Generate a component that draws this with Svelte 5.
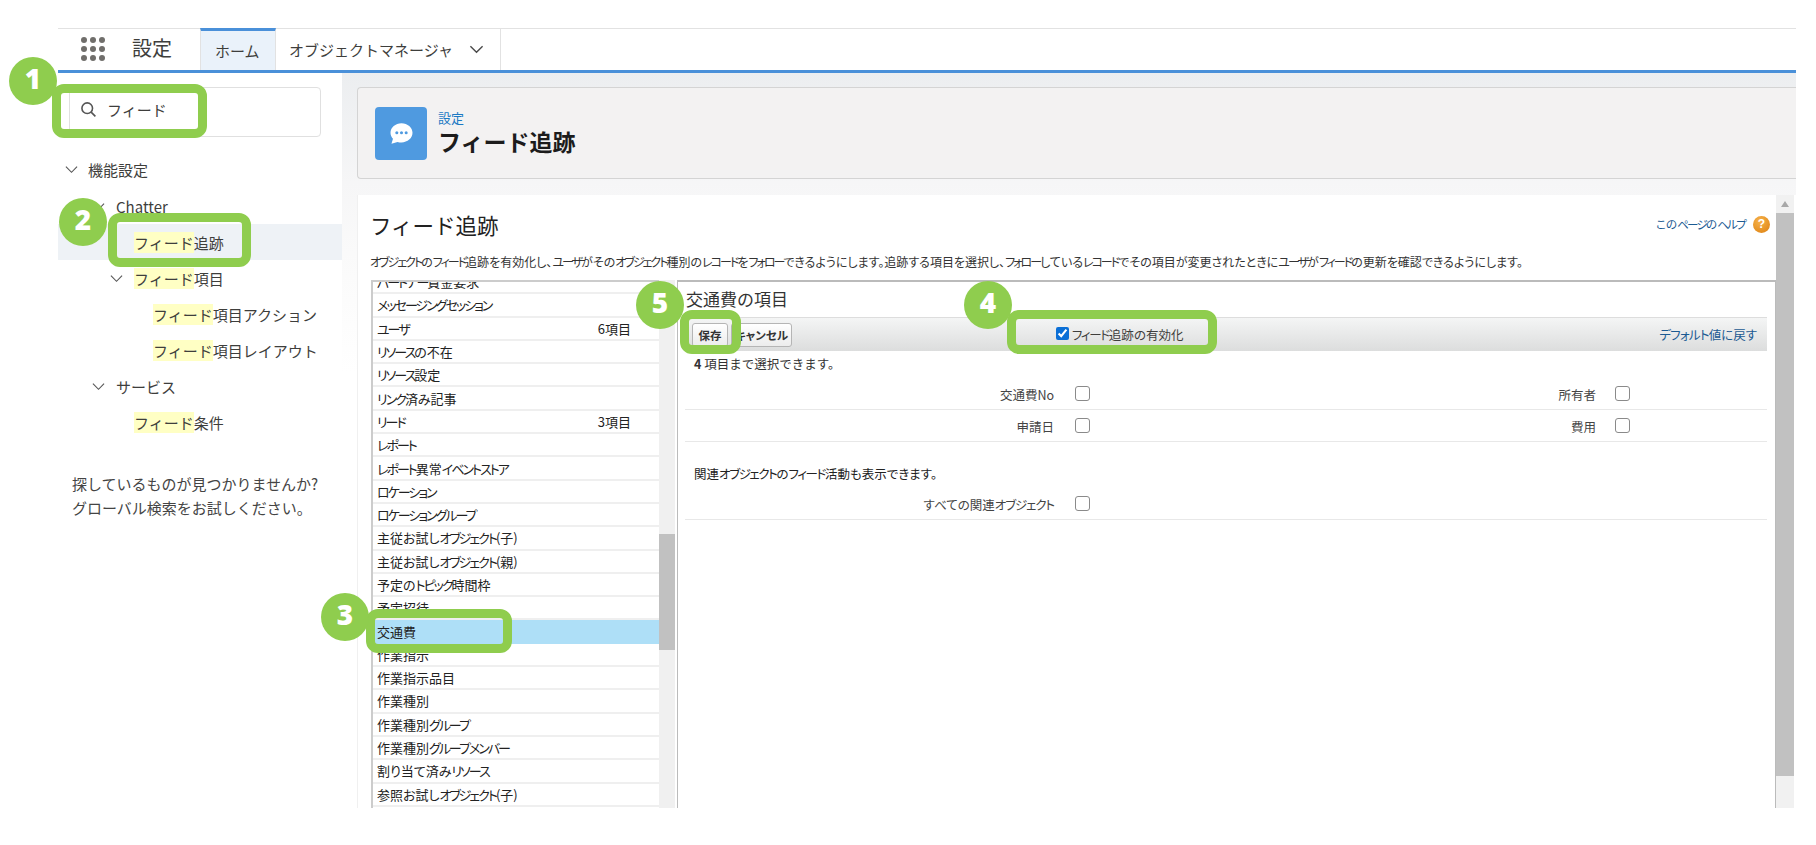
<script>
  const tree = [
    { cls: 'l0', chev: true, plain: '機能設定' },
    { cls: 'l1', chev: true, plain: 'Chatter' },
    { cls: 'l2 sel', hit: 'フィード', plain: '追跡' },
    { cls: 'l2', chev: true, hit: 'フィード', plain: '項目' },
    { cls: 'l3', hit: 'フィード', plain: '項目アクション' },
    { cls: 'l3', hit: 'フィード', plain: '項目レイアウト' },
    { cls: 'l1', chev: true, plain: 'サービス' },
    { cls: 'l2', hit: 'フィード', plain: '条件' }
  ];
  const objects = [
    ['パートナー資金要求'], ['メッセージングセッション'], ['ユーザ', '6項目'], ['リソースの不在'], ['リソース設定'],
    ['リンク済み記事'], ['リード', '3項目'], ['レポート'], ['レポート異常イベントストア'], ['ロケーション'],
    ['ロケーショングループ'], ['主従お試しオブジェクト(子)'], ['主従お試しオブジェクト(親)'], ['予定のトピック時間枠'],
    ['予定招待'], ['交通費'], ['作業指示'], ['作業指示品目'], ['作業種別'], ['作業種別グループ'],
    ['作業種別グループメンバー'], ['割り当て済みリソース'], ['参照お試しオブジェクト(子)']
  ];
  const description = 'オブジェクトのフィード追跡を有効化し、ユーザがそのオブジェクト種別のレコードをフォローできるようにします。追跡する項目を選択し、フォローしているレコードでその項目が変更されたときにユーザがフィードの更新を確認できるようにします。';

  function runs(s) {
    return s.split(/([ァ-ヶー]+)/).filter(Boolean).map((t) => ({ t, k: /^[ァ-ヶー]/.test(t) }));
  }
</script>

{#snippet kana(s)}{#each runs(s) as r}<span class:k={r.k}>{r.t}</span>{/each}{/snippet}

<div class="page">
  <header class="nav">
    <div class="dots" aria-label="アプリケーションランチャー">
      {#each Array(9) as _}<i></i>{/each}
    </div>
    <div class="app">設定</div>
    <div class="tab active">ホーム</div>
    <div class="tab">
      オブジェクトマネージャ
      <svg class="tabchev" viewBox="0 0 16 16"><path d="M1.5 4.5 8 11l6.5-6.5" /></svg>
    </div>
  </header>

  <div class="body">
    <aside class="side">
      <div class="search">
        <svg viewBox="0 0 16 16"><circle cx="6.8" cy="6.8" r="5" /><path d="m10.5 10.5 4 4" /></svg>
        <span>フィード</span>
      </div>
      <ul class="tree">
        {#each tree as t}
          <li class={t.cls}>
            {#if t.chev}<svg class="chev" viewBox="0 0 14 14"><path d="M1 4l6 6 6-6" /></svg>{/if}
            <span>{#if t.hit}<mark>{t.hit}</mark>{/if}{t.plain}</span>
          </li>
        {/each}
      </ul>
      <p class="miss">探しているものが見つかりませんか?<br />グローバル検索をお試しください。</p>
    </aside>

    <main class="main">
      <section class="head">
        <div class="ico">
          <svg viewBox="0 0 24 24">
            <path d="M12 4.5c-4.4 0-8 3.1-8 7 0 1.700.7 3.200 1.800 4.400L4.700 19.500l4.400-1.400c.9.300 1.900.4 2.900.4 4.400 0 8-3.100 8-7s-3.600-7-8-7z" fill="#fff" />
            <circle cx="8.600" cy="11.500" r="1.100" fill="#4f9ae0" /><circle cx="12" cy="11.500" r="1.100" fill="#4f9ae0" /><circle cx="15.400" cy="11.500" r="1.100" fill="#4f9ae0" />
          </svg>
        </div>
        <div>
          <div class="crumb">設定</div>
          <h1>フィード追跡</h1>
        </div>
      </section>

      <section class="panel">
        <div class="content">
          <div class="titlerow">
            <h2>フィード追跡</h2>
            <div class="help"><a href="#h">{@render kana('このページのヘルプ')}</a><span class="q">?</span></div>
          </div>
          <p class="desc">{@render kana(description)}</p>

          <div class="split">
            <div class="listwrap">
              <ul class="list">
                {#each objects as o}
                  <li class:on={o[0] === '交通費'}><span>{@render kana(o[0])}</span>{#if o[1]}<em>{o[1]}</em>{/if}</li>
                {/each}
              </ul>
            </div>
            <div class="listbar"><b></b></div>

            <div class="fields">
              <h3>交通費の項目</h3>
              <div class="toolbar">
                <button class="btn save">保存</button>
                <button class="btn cancel">キャンセル</button>
                <label class="enable"><input type="checkbox" checked /><span>{@render kana('フィード追跡の有効化')}</span></label>
                <a class="reset" href="#d">{@render kana('デフォルト値に戻す')}</a>
              </div>
              <p class="note"><strong>4</strong> 項目まで選択できます。</p>
              <div class="row">
                <label for="f1">交通費No</label><input id="f1" type="checkbox" />
                <label for="f2">所有者</label><input id="f2" type="checkbox" />
              </div>
              <div class="row">
                <label for="f3">申請日</label><input id="f3" type="checkbox" />
                <label for="f4">費用</label><input id="f4" type="checkbox" />
              </div>
              <p class="note rel">{@render kana('関連オブジェクトのフィード活動も表示できます。')}</p>
              <div class="row">
                <label for="f5">{@render kana('すべての関連オブジェクト')}</label><input id="f5" type="checkbox" />
              </div>
            </div>
          </div>
        </div>
        <div class="vbar"><span class="up"></span><b></b></div>
      </section>
    </main>
  </div>

  <div class="hl h1"></div><div class="badge b1">1</div>
  <div class="hl h2"></div><div class="badge b2">2</div>
  <div class="hl h3"></div><div class="badge b3">3</div>
  <div class="hl h4"></div><div class="badge b4">4</div>
  <div class="hl h5"></div><div class="badge b5">5</div>
</div>

<style>
  :global(body) { margin: 0; background: #fff; }
  * { box-sizing: border-box; }
  .page {
    position: relative; width: 1816px; height: 845px; padding: 28px 20px 0 58px; overflow: hidden;
    font-family: "Noto Sans CJK JP", "Noto Sans", sans-serif; color: #3e3e3c; background: #fff;
  }
  ul { list-style: none; margin: 0; padding: 0; }
  h1, h2, h3, p { margin: 0; font-weight: 400; }
  a { text-decoration: none; color: #1b5a92; }
  .k { letter-spacing: var(--k, 0); }

  .nav {
    display: flex; align-items: stretch; height: 45px; border-top: 1px solid #e2e2e2;
    border-bottom: 3px solid #4a90d9; background: #fff;
  }
  .dots { display: grid; grid-template-columns: repeat(3, 6px); gap: 3px; align-content: center; margin-left: 23px; margin-top: -2px; }
  .dots i { width: 6px; height: 6px; border-radius: 50%; background: #706e6b; }
  .app { font-size: 20px; line-height: 38px; margin-left: 27px; width: 68px; color: #3e3e3c; }
  .tab { display: flex; align-items: center; font-size: 15px; color: #3e3e3c; padding: 0 16px 0 13px; border-right: 1px solid #e2e2e2; }
  .tab.active { background: #eaf2fa; border-top: 3px solid #4a90d9; margin-top: -1px; border-left: 1px solid #e2e2e2; width: 76px; padding: 0 0 0 14px; }
  .tabchev { width: 15px; height: 15px; margin-left: 16px; fill: none; stroke: #4a4a4a; stroke-width: 1.500; }

  .body { display: flex; height: 735px; }
  .side { width: 284px; padding-top: 14px; background: #fff; flex: none; }
  .search {
    display: flex; align-items: center; gap: 10px; width: 252px; height: 50px; margin-left: 11px; padding: 0 0 6px 10px;
    border: 1px solid #e0e0e0; border-radius: 4px; font-size: 15px;
  }
  .search svg { width: 17px; height: 17px; fill: none; stroke: #555; stroke-width: 1.500; }
  .tree { margin-top: 14px; }
  .tree li { position: relative; display: flex; align-items: center; height: 36px; font-size: 15px; }
  .tree li:first-child { height: 37px; }
  .chev { position: absolute; width: 13px; height: 13px; fill: none; stroke: #555; stroke-width: 1.200; }
  .l0 { padding-left: 30px; } .l0 .chev { left: 7px; }
  .l1 { padding-left: 58px; } .l1 .chev { left: 34px; }
  .l2 { padding-left: 76px; } .l2 .chev { left: 52px; }
  .l3 { padding-left: 95px; }
  .sel { background: #eef2f6; }
  mark { background: #ffffc4; color: inherit; }
  .miss { margin: 32px 0 0 14px; font-size: 15px; line-height: 23.500px; color: #444; }

  .main {
    flex: 1; min-width: 0; padding: 14px 0 0 15px; overflow: hidden;
    background: linear-gradient(#eceef0 0, #f6f6f7 110px, #fafafa 180px, #fff 300px);
  }
  .head {
    display: flex; align-items: center; gap: 11px; height: 92px; padding-left: 17px;
    background: #f3f2f2; border: 1px solid #d4d4d4; border-right: 0; border-radius: 4px 0 0 4px;
  }
  .ico { width: 52px; height: 53px; border-radius: 4px; background: #4f9ae0; display: flex; align-items: center; justify-content: center; }
  .ico svg { width: 33px; height: 33px; }
  .crumb { font-size: 13px; line-height: 17px; color: #1b7ac4; }
  h1 { font-size: 23px; font-weight: 700; line-height: 31px; color: #1c1c1c; }

  .panel { display: flex; height: 613px; margin-top: 16px; background: #fff; border-left: 1px solid #f0f0f0; }
  .content { flex: 1; min-width: 0; padding: 11px 0 0 12px; }
  .titlerow { display: flex; justify-content: space-between; align-items: center; height: 36px; padding-right: 6px; }
  h2 { font-size: 21.500px; color: #222; }
  .help { --k: -1.700px; display: flex; align-items: center; gap: 8px; font-size: 11.500px; font-feature-settings: "palt"; }
  .q { width: 17px; height: 17px; border-radius: 50%; background: radial-gradient(circle at 40% 30%, #f6b24a, #dc7f10); color: #fff; font-size: 12px; font-weight: 700; line-height: 17px; text-align: center; font-family: "Liberation Sans", sans-serif; }
  .desc { --k: -2px; margin-top: 10px; font-size: 12px; line-height: 20px; color: #333; white-space: nowrap; font-feature-settings: "palt"; }

  .split { display: flex; height: 528px; margin-top: 8px; margin-left: 1px; }
  .listwrap { width: 288px; flex: none; overflow: hidden; border-top: 2px solid #ccc; border-left: 2px solid #ccc; }
  .list { --k: -2px; margin-top: -11px; }
  .list li {
    display: flex; justify-content: space-between; align-items: center; height: 23.300px; padding: 0 28px 0 4px;
    font-size: 13px; color: #222; border-bottom: 2px solid #efefef; white-space: nowrap; font-feature-settings: "palt";
  }
  .list li.on { background: #aedff7; border-color: #aedff7; }
  .list em { font-style: normal; }
  .listbar { width: 16px; flex: none; background: #f0f0f0; padding-top: 254px; }
  .listbar b { display: block; height: 116px; background: #c1c1c1; }

  .fields { width: 1099px; flex: none; margin-left: 2px; padding: 0 8px 0 7px; border: 1px solid #bbb; border-bottom: 0; border-top-width: 2px; }
  h3 { height: 35px; line-height: 34px; font-size: 17px; color: #333; padding-left: 1px; }
  .toolbar {
    display: flex; align-items: center; height: 34px; background: linear-gradient(#f4f5f5, #dcdddd);
    border-top: 1px solid #ddd; font-size: 11.500px; font-feature-settings: "palt";
  }
  .btn {
    height: 24px; padding: 0; font: inherit; font-weight: 700; color: #333; border: 1px solid #b5b5b5; border-radius: 3px;
    background: linear-gradient(#fff, #ececec); font-feature-settings: "palt";
  }
  .save { width: 36px; margin-left: 7px; }
  .cancel { width: 61px; margin-left: 3px; }
  .enable { --k: -1.300px; display: flex; align-items: center; gap: 3px; margin-left: 264px; font-size: 12.500px; }
  .enable input { width: 13px; height: 13px; margin: 0 0 3px; accent-color: #0b6fd6; }
  .reset { --k: -.800px; margin-left: auto; padding-right: 10px; font-size: 12.500px; }
  .note { height: 27px; line-height: 26px; padding-left: 9px; font-size: 12.500px; color: #333; }
  .note.rel { --k: -1.400px; margin-top: 19px; color: #222; font-feature-settings: "palt"; }
  .row {
    --k: -1.100px; display: grid; grid-template-columns: 369px 36px 506px 34px; align-items: center; height: 32px;
    border-bottom: 1px solid #e8e8e8; font-size: 12.500px; color: #444; font-feature-settings: "palt";
  }
  .row label { text-align: right; padding-top: 2px; }
  .row input { appearance: none; justify-self: end; width: 15px; height: 15px; margin: 0; background: #fff; border: 1.500px solid #8a8a8a; border-radius: 3px; }

  .vbar { position: relative; width: 18px; flex: none; background: #f1f1f1; padding-top: 18px; margin-right: 2px; }
  .vbar b { display: block; height: 563px; background: #c1c1c1; }
  .up { position: absolute; top: 6px; left: 5px; border: 4px solid transparent; border-top: 0; border-bottom: 6px solid #a8a8a8; }

  .hl { position: absolute; border: 9px solid #8fcd4e; border-radius: 12px; }
  .h1 { left: 52px; top: 84px; width: 155px; height: 54px; }
  .h2 { left: 108px; top: 213px; width: 143px; height: 54px; }
  .h3 { left: 366px; top: 609px; width: 146px; height: 44px; }
  .h4 { left: 1007px; top: 310px; width: 210px; height: 44px; }
  .h5 { left: 680px; top: 310px; width: 61px; height: 44px; }
  .badge {
    position: absolute; width: 48px; height: 48px; border-radius: 50%; background: #8fcd4e; color: #fff;
    font: 800 28px/43px "Open Sans", "Noto Sans", sans-serif; text-align: center;
  }
  .b1 { left: 9px; top: 57px; }
  .b2 { left: 59px; top: 198px; }
  .b3 { left: 321px; top: 593px; }
  .b4 { left: 964px; top: 281px; }
  .b5 { left: 636px; top: 281px; }
</style>
